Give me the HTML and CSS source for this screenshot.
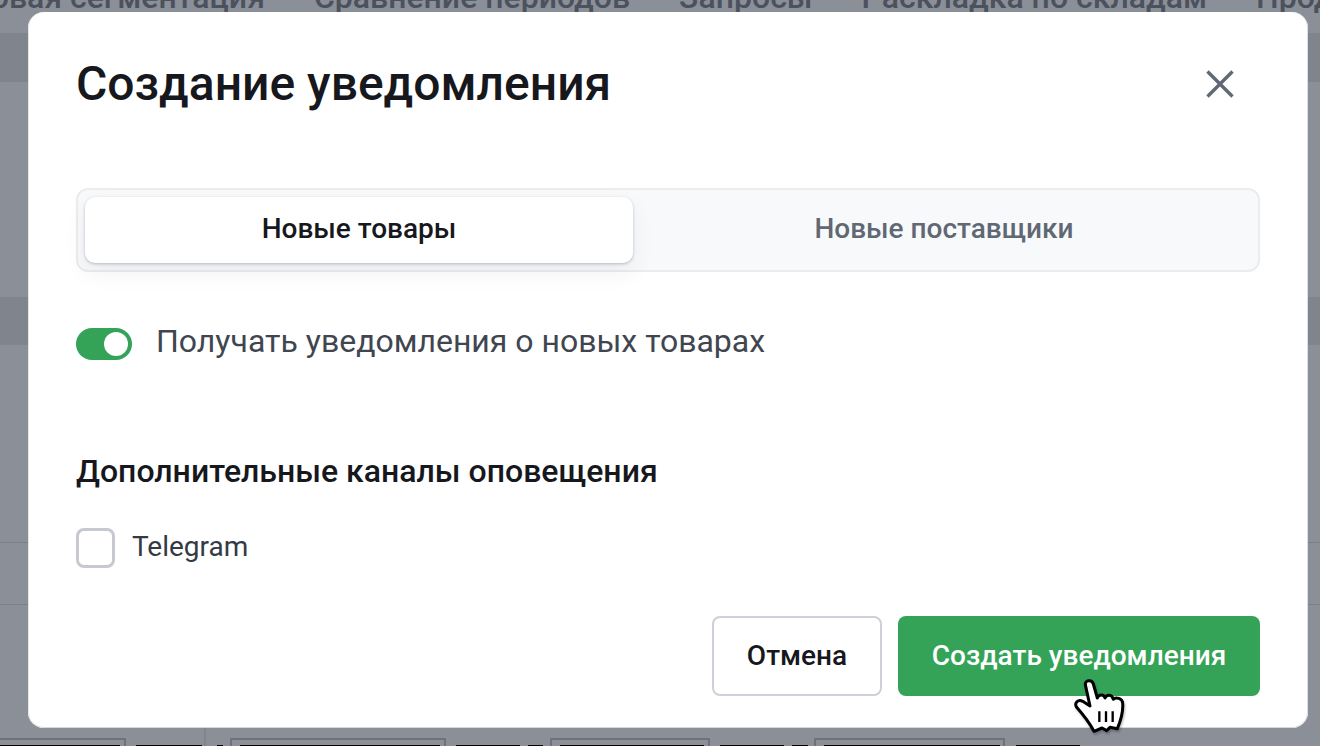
FILE: index.html
```html
<!DOCTYPE html>
<html lang="ru">
<head>
<meta charset="utf-8">
<title>Создание уведомления</title>
<link rel="stylesheet" href="styles.css">
</head>
<body>
<div class="backdrop">
  <div class="nav">
    <span>Базовая сегментация</span><span>Сравнение периодов</span><span>Запросы</span><span>Раскладка по складам</span><span>Продажи</span>
  </div>
  <div class="band b1"></div>
  <div class="band b2"></div>
  <div class="line l1"></div>
  <div class="line l2"></div>
  <div class="divider"></div>
  <span class="box i1"></span><span class="box i2"></span><span class="box i3"></span><span class="box i4"></span>
  <div class="strip"></div>
</div>
<section class="modal">
  <header class="head">
    <h1 class="title">Создание уведомления</h1>
    <svg class="close" width="32" height="32" viewBox="0 0 32 32"><path d="M3.5 3.5 L28.5 28.5 M28.5 3.5 L3.5 28.5" fill="none" stroke="#5f6873" stroke-width="3.4"/></svg>
  </header>
  <div class="tabs">
    <div class="tab active">Новые товары</div>
    <div class="tab other">Новые поставщики</div>
  </div>
  <div class="toggle-row">
    <span class="toggle"><span class="knob"></span></span>
    <span class="toggle-label">Получать уведомления о новых товарах</span>
  </div>
  <h2 class="subtitle">Дополнительные каналы оповещения</h2>
  <div class="check-row">
    <span class="check"></span>
    <span class="check-label">Telegram</span>
  </div>
  <div class="actions">
    <button class="btn cancel">Отмена</button>
    <button class="btn primary">Создать уведомления</button>
  </div>
</section>
<svg class="cursor" width="80" height="70" viewBox="0 0 240 210">
  <path d="M76 44 C74 30 96 28 100 42 L112 84 C116 72 132 72 135 84 C140 72 156 72 160 88 C166 80 188 84 188 100 C190 125 182 152 172 176 L150 172 L140 182 L126 174 L102 184 C90 162 66 130 50 112 C42 100 54 86 68 94 L90 108 Z" fill="#fff" stroke="#000" stroke-width="9" stroke-linejoin="round"/>
  <path d="M118 124 V156 M138 124 V156 M158 124 V156" stroke="#000" stroke-width="7" fill="none"/>
</svg>
</body>
</html>
```
FILE: styles.css
```css
* { box-sizing: border-box; }
html, body { margin: 0; height: 100%; }
body { width: 1320px; height: 746px; overflow: hidden; background: #8a8f98; font-family: Roboto, "Noto Sans", sans-serif; position: relative; }
.backdrop { position: absolute; inset: 0; overflow: hidden; }
.nav { position: absolute; top: -22px; left: -63px; display: flex; gap: 49px; font-size: 32px; font-weight: 500; color: #4c525d; white-space: nowrap; }
.band { position: absolute; left: 0; right: 0; background: #80858d; }
.b1 { top: 33px; height: 49px; }
.b2 { top: 297px; height: 48px; }
.line { position: absolute; left: 0; right: 0; height: 1px; background: #7a7f88; }
.l1 { top: 542px; }
.l2 { top: 604px; }
.divider { position: absolute; left: 204px; top: 728px; bottom: 0; width: 2px; background: #7f848d; }
.box { position: absolute; top: 738px; height: 20px; border: 2px solid #6d727b; background: #8a8f98; }
.i1 { left: -10px; width: 136px; }
.i2 { left: 230px; width: 216px; }
.i3 { left: 550px; width: 160px; }
.i4 { left: 814px; width: 191px; }
.strip { position: absolute; left: 0; bottom: 0; width: 1080px; height: 1px; background: linear-gradient(to right, #000 120px, transparent 120px, transparent 136px, #000 136px, #000 202px, transparent 202px, transparent 217px, #000 217px, #000 223px, transparent 223px, transparent 240px, #000 240px, #000 440px, transparent 440px, transparent 456px, #000 456px, #000 520px, transparent 520px, transparent 528px, #000 528px, #000 543px, transparent 543px, transparent 560px, #000 560px, #000 704px, transparent 704px, transparent 720px, #000 720px, #000 784px, transparent 784px, transparent 792px, #000 792px, #000 808px, transparent 808px, transparent 824px, #000 824px, #000 1000px, transparent 1000px, transparent 1016px, #000 1016px); }
.modal { position: absolute; left: 28px; top: 12px; width: 1280px; height: 716px; background: #fff; border-radius: 16px; padding: 48px 48px 32px; display: flex; flex-direction: column; box-shadow: inset 1px 0 0 #e4e6e8, inset -1px 0 0 #dcdee1, inset 0 -1px 0 #d5d7da; }
.head { display: flex; justify-content: space-between; align-items: center; height: 48px; }
.title { margin: 0; font-size: 48px; font-weight: 500; line-height: 48px; color: #16181d; }
.close { margin-right: 24px; }
.tabs { margin-top: 80px; height: 84px; display: flex; padding: 7px; background: #f8f9fb; border: 2px solid #eaecf0; border-radius: 12px; }
.tab { display: flex; align-items: center; justify-content: center; padding-bottom: 3px; font-size: 28px; font-weight: 500; color: #5f6873; }
.active { flex: 0 0 548px; background: #fff; color: #16181d; border-radius: 10px; box-shadow: 0 1px 3px rgba(20,25,40,.25), 0 10px 24px rgba(20,25,40,.06); }
.other { flex: 1 1 auto; padding-left: 4px; }
.toggle-row { margin-top: 52px; display: flex; align-items: center; gap: 24px; height: 36px; }
.toggle { width: 56px; height: 32px; margin-top: 4px; border-radius: 16px; background: #34a357; display: flex; justify-content: flex-end; align-items: center; padding: 0 4px; }
.knob { width: 24px; height: 24px; border-radius: 50%; background: #fff; }
.toggle-label { font-size: 32px; color: #3f4650; margin-bottom: 2px; }
.subtitle { margin: 93px 0 0; font-size: 32px; font-weight: 500; line-height: 36px; color: #16181d; }
.check-row { margin-top: 37px; display: flex; align-items: center; gap: 16px; }
.check { width: 39px; height: 40px; margin: 2px 1px 0 0; border: 3px solid #c6cad0; border-radius: 8px; background: #fff; }
.check-label { font-size: 28px; color: #343a44; margin-bottom: 2px; }
.actions { margin-top: auto; display: flex; justify-content: flex-end; gap: 16px; }
.btn { height: 80px; padding: 0 0 2px; border-radius: 8px; font: 500 28px Roboto, sans-serif; }
.cancel { width: 170px; background: #fff; border: 2px solid #cdd1d7; color: #16181d; }
.primary { width: 362px; background: #34a357; border: 0; color: #fff; }
.cursor { position: absolute; left: 1060px; top: 670px; filter: drop-shadow(1px 2px 1px rgba(0,0,0,.25)); }
```
